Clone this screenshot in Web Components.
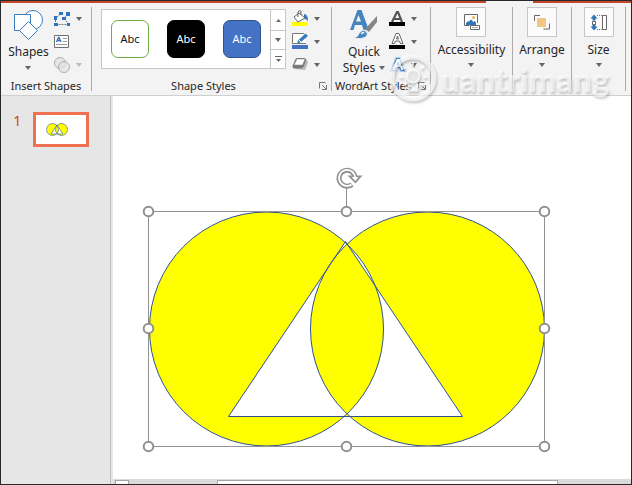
<!DOCTYPE html>
<html lang="en">
<head>
<meta charset="utf-8">
<title>Presentation editor</title>
<style>
html,body{height:100%;margin:0}
body{font:12px/16px "Noto Sans","Open Sans",sans-serif;color:#262626;overflow:hidden}
</style>
</head>
<body>
<editor-window></editor-window>
<script>
const ICONS = {
  shapes: ['14 9 31 31', `<g fill="#fff" stroke="#3b7cc0"><circle cx="34" cy="20" r="9.5"/><path d="M15.500 14.500h16v16h-16z"/><path d="M29.500 21.500l9 9-9 9-9-9z"/></g>`],
  points: ['53 9 18 16', `<path d="M55.500 23V16L61 12M68 12l-4 4.500 5 6M55.500 22.500h13" fill="none" stroke="#777" stroke-dasharray="2 1"/><path fill="#2f74b8" d="M59 10h4v3h-4zM66 10h4v4h-4zM54 14h3v4h-3zM62 15h4v3h-4zM54 21h4v3h-4zM67 21h3v3h-3z"/>`],
  textbox: ['53 32 18 15', `<path d="M54.500 33.500h14v12h-14z" fill="#fff" stroke="#707070"/><path d="M63 36.500h4M63 39.500h4M56 42.500h11" stroke="#999"/><path d="M56.500 40l2-4.500h.5l2 4.500M57.500 38.500h3" fill="none" stroke="#2f74b8" stroke-width="1.300"/>`],
  merge: ['53 54 18 18', `<g fill="#e4dfe3" fill-opacity=".7" stroke="#b3adb2"><circle cx="60" cy="61" r="5.500"/><circle cx="64" cy="65" r="5.500"/></g>`],
  fill: ['292 9 17 17', `<path d="M292 21h16v4h-16z" fill="#ff0"/><path d="M304 13q4 0 4 7l-4-3z" fill="#3a7abd"/><path d="M299 12l6 5-7 4-4-5z" fill="#fff" stroke="#666"/><path d="M298 16v-5q1-2 3-1v4" fill="none" stroke="#666"/>`],
  outline: ['292 32 17 17', `<path d="M304 32.500h-11.500v10H306" fill="#fff" stroke="#777"/><path d="M305.500 32.500l2.500 2.500-7 6-4 2 1.500-4z" fill="#397bb9"/><path d="M299 39l2 2" stroke="#fff"/><path d="M292 44h16v4h-16z" fill="#4472c4"/>`],
  effects: ['292 55 17 17', `<path d="M295 68l10 1 3-8-2-3z" fill="#999" opacity=".65"/><path d="M297 57.500h7.500q1.500 0 1 1.500l-2 6q-1 2-2.500 2h-7q-1.500 0-1-2l2.500-6q.5-1.500 1.500-1.500z" fill="#777" stroke="#777"/><path d="M297 58h8l-2.500 6H294z" fill="#fff" stroke="#888" stroke-width=".5"/>`],
  quick: ['351 10 28 31', `<path d="M351 31l7.500-20h4l7 19-5 1-1.500-5h-7l-1.500 5zM357 22.500h5L359.500 16z" fill="#4484bf" fill-rule="evenodd"/><path d="M378 17v6l-8 10-4-3z" fill="#858585"/><path d="M355 39q5-2 5-5 3-4 7-2 3 3 0 6-5 3-12 1z" fill="#4484bf" stroke="#f3f3f3"/><path d="M362 34q2-2 4 0-3 0-3 2z" fill="#fff"/>`],
  afill: ['388 9 17 17', `<path d="M391 21l5-10h1l4 10M393 18h6" fill="none" stroke="#555" stroke-width="2.200"/><path d="M388 21h16v4h-16z"/>`],
  aoutline: ['388 32 17 17', `<path d="M391 42.500l4-10h3l4 10h-2.500l-1-2.500h-4l-1 2.500zM395.500 38h2L396.500 35z" fill="#fff" stroke="#666" fill-rule="evenodd"/><path d="M388 44h16v4h-16z"/>`],
  aeffects: ['388 54 17 17', `<path d="M391 68.500l4.500-12h3l4.500 12h-3l-1-3h-4l-1 3zM396 63h2l-1-3z" fill="#fff" stroke="#a7c9ea" stroke-width="3" fill-rule="evenodd"/><path d="M391 68.500l4.500-12h3l4.500 12h-3l-1-3h-4l-1 3zM396 63h2l-1-3z" fill="#fff" stroke="#3f7fc1" fill-rule="evenodd"/>`],
  access: ['463 14 17 17', `<path d="M477.500 23v-8.500h-13v11h5" fill="#fff" stroke="#666"/><path d="M466 25v-2l2-2 1 1 1-2h2l1 2 2-1 1 2v2z" fill="#2f74b8"/><circle cx="473.500" cy="17.500" r="1.500" fill="#efb05d"/><path d="M470.500 25.500h9v4h-9z" fill="#fff" stroke="#666"/><path d="M472 27.500h6" stroke="#aaa"/>`],
  arrange: ['534 14 16 15', `<path d="M537 17h9v9h-9z" fill="#f0c883"/><path d="M534.500 20v-5.500h5.500M549.500 22.500v5.500h-6" fill="none" stroke="#666"/>`],
  size: ['590 13 17 17', `<path d="M594 13.500l3.500 4h-2v2h-3v-2h-2zM594 29.500l3.500-4h-2v-2h-3v2h-2z" fill="#2f74b8"/><path d="M592.500 20.500h3v3h-3z" fill="#fff" stroke="#666"/><path d="M597 14.500h5M597 28.500h5" stroke="#777" stroke-dasharray="1 1"/><path d="M602.500 14.500h4v14h-4z" fill="#fff" stroke="#666"/>`],
  launcher: ['0 0 8 8', `<path d="M.5 6.500v-6h6" fill="none" stroke="#777"/><path d="M3 3l4 4M7.500 3v4.500H3" stroke="#777" fill="none"/>`],
  down: ['0 0 6 4', `<path d="M0 0h6L3 4z" fill="currentColor"/>`],
  up: ['0 0 5 3', `<path d="M0 3h5L2.500 0z" fill="currentColor"/>`],
  more: ['0 0 7 6', `<path d="M0 .5h7" stroke="currentColor"/><path d="M1 3h5L3.500 6z" fill="currentColor"/>`]
};
const RESET = `button{font:inherit;color:inherit;background:none;border:0;padding:0;margin:0}`;
const define = (name, markup) => customElements.define(name, class extends HTMLElement {
  connectedCallback() {
    if (this.shadowRoot) return;
    const t = document.createElement('template');
    t.innerHTML = typeof markup === 'function' ? markup(this) : markup;
    this.attachShadow({mode: 'open'}).append(t.content.cloneNode(true));
  }
});

define('ui-icon', el => {
  const [box, body] = ICONS[el.getAttribute('name')];
  const [, , w, h] = box.split(' ');
  return `<style>:host{display:block;flex:none}svg{display:block}</style>
    <svg width="${w}" height="${h}" viewBox="${box}" aria-hidden="true">${body}</svg>`;
});

define('ribbon-group', el => `<style>
  :host{display:flex;flex-direction:column;min-width:0;margin:4px 0;border-right:1px solid #ababab;box-sizing:border-box}
  .body{flex:1;display:flex;justify-content:center;align-items:flex-start;min-height:0}
  footer{display:flex;align-items:center;height:10px;white-space:nowrap;font-size:11px;line-height:10px}
  span{flex:1;text-align:center}
  ${RESET} button{width:16px;display:flex;justify-content:center}
  </style><div class="body"><slot></slot></div>
  <footer><span>${el.getAttribute('label') || ''}</span>${el.hasAttribute('launcher') ? '<button aria-label="More options"><ui-icon name="launcher"></ui-icon></button>' : ''}</footer>`);

define('big-button', el => `<style>
  :host{display:block} ${RESET}
  button{display:flex;flex-direction:column;align-items:center;margin-top:2px;white-space:nowrap}
  .label{margin-top:4px}
  .last{display:flex;align-items:center;gap:4px;height:16px}
  ui-icon[name=down]{color:#666}
  :host([framed]) button{margin-top:0}
  :host([framed]) .pic{display:grid;place-items:center;width:28px;height:28px;border:1px solid #c6c6c6;background:#fbfbfb}
  :host([framed]) .label{margin-top:5px}
  :host([framed]) .last{height:14px}
  </style><button><span class="pic"><ui-icon name="${el.getAttribute('icon')}"></ui-icon></span>
  <span class="label"><slot></slot></span><span class="last"><slot name="second"></slot><ui-icon name="down"></ui-icon></span></button>`);

define('tool-column', el => `<style>
  :host{display:grid;grid-auto-rows:23px} ${RESET}
  button{display:flex;align-items:center;gap:5px;color:#666}
  button.off ui-icon[name=down]{color:#bbb}
  </style>${el.getAttribute('tools').split(' ').map(s => {
    const [n, label, flag] = s.split(':');
    return `<button class="${flag || ''}" aria-label="${label}"><ui-icon name="${n}"></ui-icon>${flag === 'plain' ? '' : '<ui-icon name="down"></ui-icon>'}</button>`;
  }).join('')}`);

define('style-gallery', `<style>
  :host{display:flex;border:1px solid #c6c6c6;background:#fff;height:58px;margin-top:2px} ${RESET}
  .items{display:flex;gap:18px;align-items:center;padding:0 9px}
  .items button{width:38px;height:38px;border:1px solid #70ad47;border-radius:7px;background:#fff;color:#111;font-size:11px}
  .items .black{background:#000;border-color:#000;color:#fff}
  .items .blue{background:#4472c4;border-color:#2f528f;color:#fff}
  .scroll{display:grid;grid-template-rows:20px 19px 1fr;width:14px;border-left:1px solid #c6c6c6;color:#666}
  .scroll button{display:grid;place-items:center}
  .scroll button+button{border-top:1px solid #c6c6c6}
  </style><div class="items"><button>Abc</button><button class="black">Abc</button><button class="blue">Abc</button></div>
  <div class="scroll"><button aria-label="Previous"><ui-icon name="up"></ui-icon></button><button aria-label="Next"><ui-icon name="down"></ui-icon></button><button aria-label="More"><ui-icon name="more"></ui-icon></button></div>`);

define('title-strip', `<style>
  :host{display:grid;grid-template-columns:485fr 47fr 98fr;height:2px}
  i{background:#c2472b}i.tab{background:#f3f3f3}
  </style><i></i><i class="tab"></i><i></i>`);

define('format-ribbon', `<style>
  :host{display:grid;grid-template-columns:91fr 240fr 99fr 82fr 59fr 54fr 5fr;height:92px;background:#f3f3f3;border-bottom:1px solid #cfcfcf}
  .row{display:flex;padding-right:2px}
  .a{gap:4px}.b{gap:6px}
  </style>
  <ribbon-group label="Insert Shapes"><div class="row a"><big-button icon="shapes">Shapes</big-button><tool-column tools="points:Edit textbox:TextBox:plain merge:Merge:off"></tool-column></div></ribbon-group>
  <ribbon-group label="Shape Styles" launcher><div class="row b"><style-gallery></style-gallery><tool-column tools="fill:Fill outline:Outline effects:Effects"></tool-column></div></ribbon-group>
  <ribbon-group label="WordArt Styles" launcher><div class="row a"><big-button icon="quick">Quick<span slot="second">Styles</span></big-button><tool-column tools="afill:TextFill aoutline:TextOutline aeffects:TextEffects"></tool-column></div></ribbon-group>
  <ribbon-group><big-button framed icon="access">Accessibility</big-button></ribbon-group>
  <ribbon-group><big-button framed icon="arrange">Arrange</big-button></ribbon-group>
  <ribbon-group><big-button framed icon="size">Size</big-button></ribbon-group>`);

define('slide-list', `<style>
  :host{display:block;background:#e6e6e6;border-right:1px solid #bdbdbd;padding:16px 12px;box-sizing:border-box} ${RESET}
  button{display:flex;align-items:flex-start;gap:11px;color:#d2492a;font-size:15px}
  .thumb{box-sizing:border-box;width:56px;height:35px;border:3px solid #ee7152;background:#fff;display:block}
  svg{display:block}
  </style><button aria-label="Slide 1"><span>1</span><span class="thumb"><svg width="50" height="29" viewBox="0 0 50 29"><path fill="#ff0" fill-rule="evenodd" stroke="#587386" stroke-width=".7" d="M10.500 14.500a6 6 0 1 1 12 0a6 6 0 1 1-12 0M19.500 14.500a6 6 0 1 1 12 0a6 6 0 1 1-12 0M21 10l-6 9h12z"/></svg></span></button>`);

define('merged-shape', () => {
  const pts = [[148.5,211.5],[346.5,211.5],[544.5,211.5],[148.5,328.5],[544.5,328.5],[148.5,446.5],[346.5,446.5],[544.5,446.5]];
  return `<style>:host{display:block}svg{display:block}</style>
  <svg width="415" height="295" viewBox="140 160 415 295" role="img" aria-label="Two circles and a triangle">
  <path fill="#ff0" fill-rule="evenodd" stroke="#2f528f" d="M149.500 329a117 117 0 1 1 234 0a117 117 0 1 1-234 0M310.500 329a117 117 0 1 1 234 0a117 117 0 1 1-234 0M345.500 241.500L228.500 416.500H462.500z"/>
  <path d="M148.500 211.500h396v235h-396zM346.500 187v24" fill="none" stroke="#919191"/>
  <g fill="#fff" stroke="#919191" stroke-width="2">${pts.map(([x, y]) => `<circle cx="${x}" cy="${y}" r="4.800"/>`).join('')}</g>
  <g fill="none"><path d="M352 184.500a8 8 0 1 1 3-7" stroke="#919191" stroke-width="5"/><path d="M347.500 175.500h15l-7 8z" fill="#919191"/><path d="M351.500 184.500a8 8 0 1 1 3.500-7" stroke="#fff" stroke-width="1.800"/><path d="M351.500 177h7l-3 4z" fill="#fff"/></g>
  </svg>`;
});

define('slide-canvas', `<style>
  :host{display:flex;flex-direction:column;background:#e6e6e6;padding-left:2px;min-width:0}
  .page{flex:1;background:#fff;position:relative;overflow:hidden}
  merged-shape{position:absolute;left:27px;top:64px}
  .bar{height:5px;display:grid;grid-template-columns:14fr 88fr 341fr 73fr;background:#dadada;padding-left:2px;overflow:hidden}
  .bar i{height:8px;margin-top:1px;box-sizing:border-box}
  .bar i:nth-child(odd){border:1px solid #a5a5a5;background:#fff}
  </style><div class="page"><merged-shape></merged-shape></div><div class="bar"><i></i><i></i><i></i><i></i></div>`);

define('brand-mark', `<style>
  :host{display:flex;align-items:center;color:rgba(255,255,255,.62);font:900 33px/44px Lato,sans-serif;pointer-events:none;filter:drop-shadow(1px 2px 1px rgba(0,0,0,.3))}
  svg{display:block;flex:none}
  </style><svg width="54" height="50" viewBox="386 54 54 50" aria-hidden="true"><g fill="none" stroke="#fff" stroke-opacity=".7"><circle cx="412" cy="78" r="21" stroke-width="5"/><circle cx="412" cy="76" r="6.500" stroke-width="2" fill="#fff" fill-opacity=".5"/><path d="M412 62v4M401 66l3 3M423 66l-3 3M398 77h4M422 77h4M402 86l3-3M422 86l-3-3" stroke-width="2"/><path d="M408 84v6h8v-6" stroke-width="3"/></g></svg><span>uantrimang</span>`);

define('editor-window', `<style>
  :host{display:flex;flex-direction:column;height:100vh;box-sizing:border-box;border:1px solid #282828;position:relative}
  main{flex:1;display:grid;grid-template-columns:110px 1fr;min-height:0}
  brand-mark{position:absolute;left:386px;top:53px}
  </style><title-strip></title-strip><format-ribbon></format-ribbon>
  <main><slide-list></slide-list><slide-canvas></slide-canvas></main><brand-mark></brand-mark>`);
</script>
</body>
</html>
